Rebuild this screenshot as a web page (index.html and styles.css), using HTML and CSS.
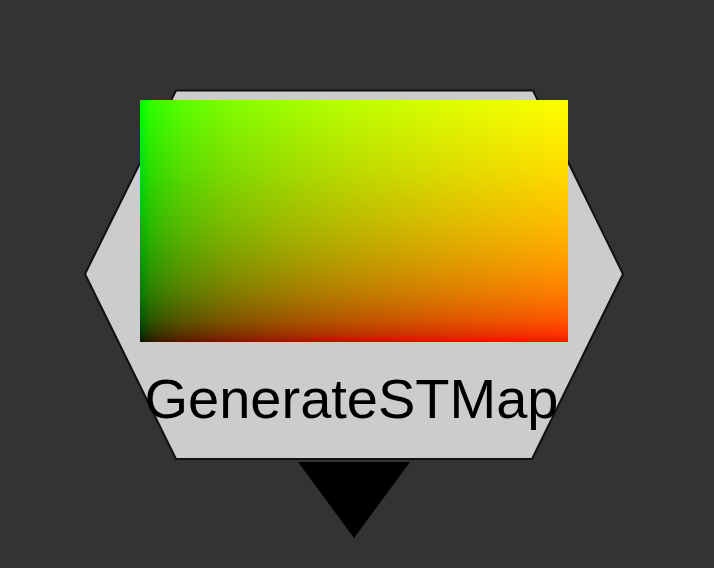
FILE: index.html
```html
<!DOCTYPE html>
<html>
<head>
<meta charset="utf-8">
<link rel="stylesheet" href="styles.css">
</head>
<body>
<div class="canvas">
  <svg class="shapes" width="714" height="568" viewBox="0 0 714 568">
    <polygon class="out" points="298,462 410,462 354,538"/>
    <polygon class="hex" points="85,274 176,90.5 533,90.5 623,274 532,459 176,459"/>
  </svg>
  <div class="node">
    <div class="preview"></div>
    <div class="label">GenerateSTMap</div>
  </div>
</div>
</body>
</html>
```
FILE: styles.css
```css
html, body {
  margin: 0;
  padding: 0;
  background: #333333;
}
.canvas {
  position: relative;
  width: 714px;
  height: 568px;
  overflow: hidden;
}
.shapes {
  position: absolute;
  left: 0;
  top: 0;
}
.hex {
  fill: #cccccc;
  stroke: #111111;
  stroke-width: 2;
  stroke-linejoin: round;
}
.out {
  fill: #000000;
}
.node {
  position: absolute;
  left: 85px;
  top: 90px;
  width: 538px;
  display: flex;
  flex-direction: column;
  align-items: center;
  padding-top: 10px;
}
.preview {
  width: 428px;
  height: 242px;
  background:
    linear-gradient(to right,
      rgb(0,0,0) 0%,
      rgb(40,0,0) 2%,
      rgb(63,0,0) 5%,
      rgb(89,0,0) 10%,
      rgb(124,0,0) 20%,
      rgb(149,0,0) 30%,
      rgb(170,0,0) 40%,
      rgb(188,0,0) 50%,
      rgb(203,0,0) 60%,
      rgb(218,0,0) 70%,
      rgb(231,0,0) 80%,
      rgb(243,0,0) 90%,
      rgb(255,0,0) 100%),
    linear-gradient(to top,
      rgb(0,20,0) 0%,
      rgb(0,40,0) 2%,
      rgb(0,63,0) 5%,
      rgb(0,89,0) 10%,
      rgb(0,124,0) 20%,
      rgb(0,149,0) 30%,
      rgb(0,170,0) 40%,
      rgb(0,188,0) 50%,
      rgb(0,203,0) 60%,
      rgb(0,218,0) 70%,
      rgb(0,231,0) 80%,
      rgb(0,243,0) 90%,
      rgb(0,255,0) 100%);
  background-blend-mode: screen;
}
.label {
  margin-top: 25px;
  margin-right: 5px;
  font-family: "Liberation Sans", Arial, sans-serif;
  font-size: 56px;
  line-height: 64px;
  color: #000000;
  white-space: nowrap;
}
```
